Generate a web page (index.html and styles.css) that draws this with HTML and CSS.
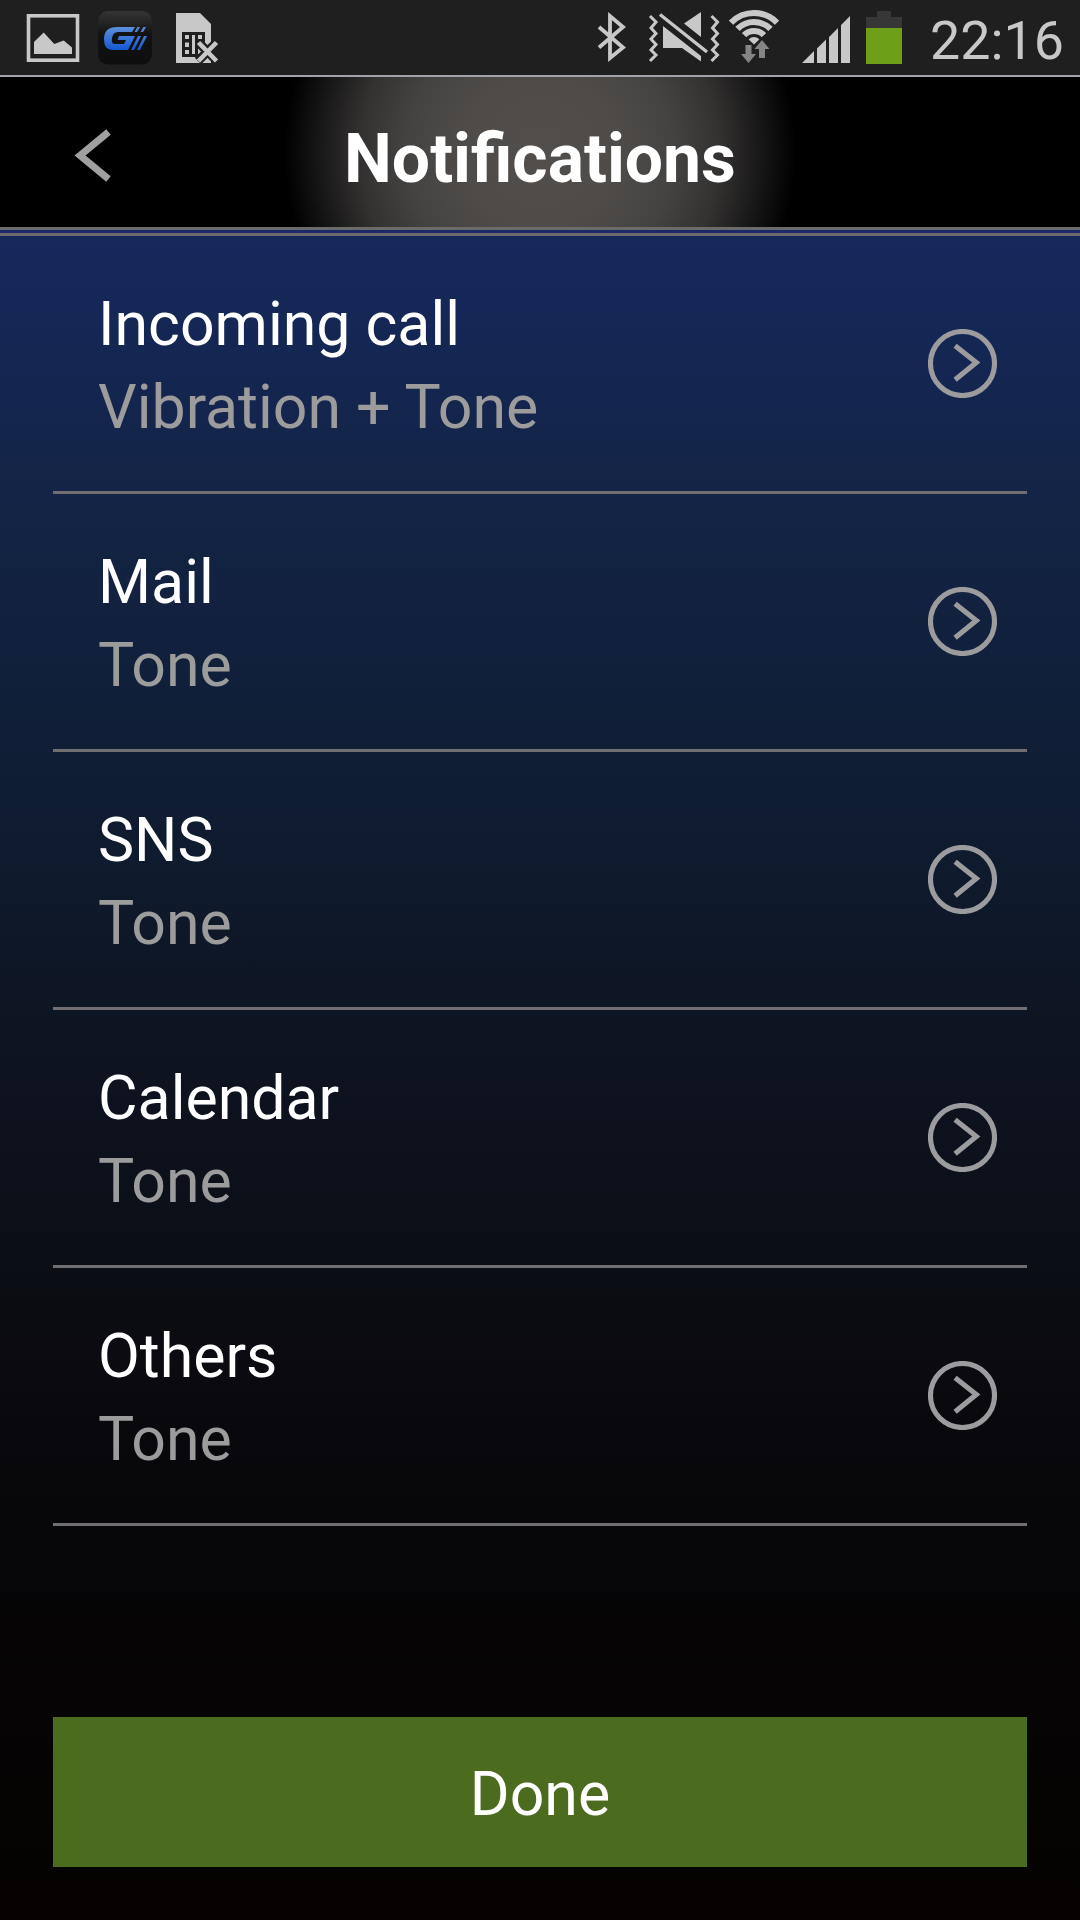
FILE: index.html
```html
<!DOCTYPE html>
<html lang="en">

<head>
    <meta charset="UTF-8">
    <meta name="viewport" content="width=device-width, initial-scale=1.0">
    <title>Notifications</title>
    <link rel="stylesheet" href="styles.css">
</head>

<body>
    <div class="status-bar">
        <div class="status-left">
            <!-- screenshot saved -->
            <svg width="54" height="75" viewBox="26 0 54 75">
                <rect x="28.5" y="15.8" width="49" height="44.4" fill="none" stroke="#c8c8c8" stroke-width="3.6" />
                <path d="M34 54V42L43.7 32.5L54.3 44L63.7 40.5L72 47.5V54Z" fill="#c8c8c8" />
            </svg>
            <!-- watch app -->
            <svg width="54" height="75" viewBox="98 0 54 75">
                <defs>
                    <linearGradient id="tile" x1="0" y1="0" x2="0" y2="1">
                        <stop offset="0" stop-color="#353535" />
                        <stop offset="0.45" stop-color="#121212" />
                        <stop offset="1" stop-color="#0e0e0e" />
                    </linearGradient>
                    <linearGradient id="blue" gradientUnits="userSpaceOnUse" x1="0" y1="27" x2="0" y2="51">
                        <stop offset="0" stop-color="#5d90dc" />
                        <stop offset="1" stop-color="#1055d0" />
                    </linearGradient>
                </defs>
                <rect x="98" y="11" width="54" height="53.5" rx="10" fill="url(#tile)" />
                <path d="M135 27H117Q104 27 104 39Q104 50 112 50H128L135 36H119L117.500 40H126L124 44H115Q111 44 112 38Q113 32 118 32H132Z" fill="url(#blue)" />
                <path d="M137.500 27H140L137 32H134.500ZM143.500 27H146L143 32H140.500ZM138 36H141L134 50H131ZM144 36H147L140 50H137Z" fill="url(#blue)" />
            </svg>
            <!-- no sim card -->
            <svg width="54" height="75" viewBox="170 0 54 75">
                <path d="M176 13H200L211 24V63H176Z" fill="#c8c8c8" />
                <path d="M182 32H205V57H182Z" fill="#1f1f1f" />
                <path d="M185 35H189V39H185ZM185 42.500H189V47H185ZM185 50H189V54H185ZM192 35H195V54H192ZM198 35H202V39H198ZM198 42.500H202V54H198Z" fill="#c8c8c8" />
                <path d="M198 42L217 61M217 42L198 61" stroke="#1f1f1f" stroke-width="9" />
                <path d="M212 24V39L220 38V65H194V63H212Z" fill="#1f1f1f" />
                <path d="M198.500 42.500L216.500 61M216.500 42.500L198.500 61" stroke="#c8c8c8" stroke-width="4.6" />
            </svg>
        </div>
        <div class="status-right">
            <!-- bluetooth -->
            <svg width="50" height="75" viewBox="590 0 50 75">
                <path d="M599 27L623 47.500L610 58V16L623 27L599 47.500" fill="none" stroke="#c8c8c8" stroke-width="3.8" />
            </svg>
            <!-- vibrate -->
            <svg width="84" height="75" viewBox="640 0 84 75">
                <path d="M650 16L656 22L651 28L656 33.500L651 39L656 44.500L651 50L656 55L650 61M711.500 16L717.500 22L712.500 28L717.500 33.500L712.500 39L717.500 44.500L712.500 50L717.500 55L711.500 61" fill="none" stroke="#c8c8c8" stroke-width="3" />
                <path d="M663 26L701 56V61.500L682 48H663ZM701 12V37L684 23.500Z" fill="#c8c8c8" />
                <path d="M660 14.500L707 52" stroke="#c8c8c8" stroke-width="3.4" />
            </svg>
            <!-- wifi -->
            <svg width="60" height="75" viewBox="724 0 60 75">
                <defs>
                    <clipPath id="fan">
                        <path d="M754 44.500L726 18V0H782V18Z" />
                    </clipPath>
                </defs>
                <g clip-path="url(#fan)" fill="none" stroke="#c8c8c8" stroke-width="6">
                    <circle cx="754" cy="45" r="32" />
                    <circle cx="754" cy="45" r="23" />
                    <circle cx="754" cy="45" r="14" />
                    <circle cx="754" cy="44" r="3.500" stroke-width="7" />
                </g>
                <path d="M745.500 45H751.500V54H756L748.500 63L741 54H745.500ZM759 58V49H754.500L762 40L769.500 49H765V58Z" fill="#858585" />
            </svg>
            <!-- signal -->
            <svg width="74" height="75" viewBox="784 0 74 75">
                <path d="M802 63L814 51V63ZM817 48.500L826 39.500V63H817ZM829 37L838 28V63H829ZM841 25L850 16V63H841Z" fill="#c8c8c8" />
            </svg>
            <!-- battery -->
            <svg width="52" height="75" viewBox="858 0 52 75">
                <path d="M866 64V17H877V11H891V17H902V64Z" fill="#373737" />
                <rect x="866" y="28" width="36" height="36" fill="#6f9f18" />
            </svg>
            <div class="clock">22:16</div>
        </div>
    </div>

    <div class="header">
        <a class="back" href="#" aria-label="Back">
            <svg width="40" height="60" viewBox="0 0 40 60">
                <path d="M36.500 7L8 30.500L36.500 54" fill="none" stroke="#a0a0a0" stroke-width="7" />
            </svg>
        </a>
        <h1>Notifications</h1>
    </div>

    <div class="content">
        <ul class="list">
            <li class="item">
                <div class="text">
                    <h2>Incoming call</h2>
                    <p>Vibration + Tone</p>
                </div>
                <svg class="arrow" viewBox="0 0 70 70">
                    <circle cx="35" cy="35" r="32.5" />
                    <path d="M27.500 17L49 34L27.500 51.500" />
                </svg>
            </li>
            <li class="item">
                <div class="text">
                    <h2>Mail</h2>
                    <p>Tone</p>
                </div>
                <svg class="arrow" viewBox="0 0 70 70">
                    <circle cx="35" cy="35" r="32.5" />
                    <path d="M27.500 17L49 34L27.500 51.500" />
                </svg>
            </li>
            <li class="item">
                <div class="text">
                    <h2>SNS</h2>
                    <p>Tone</p>
                </div>
                <svg class="arrow" viewBox="0 0 70 70">
                    <circle cx="35" cy="35" r="32.5" />
                    <path d="M27.500 17L49 34L27.500 51.500" />
                </svg>
            </li>
            <li class="item">
                <div class="text">
                    <h2>Calendar</h2>
                    <p>Tone</p>
                </div>
                <svg class="arrow" viewBox="0 0 70 70">
                    <circle cx="35" cy="35" r="32.5" />
                    <path d="M27.500 17L49 34L27.500 51.500" />
                </svg>
            </li>
            <li class="item">
                <div class="text">
                    <h2>Others</h2>
                    <p>Tone</p>
                </div>
                <svg class="arrow" viewBox="0 0 70 70">
                    <circle cx="35" cy="35" r="32.5" />
                    <path d="M27.500 17L49 34L27.500 51.500" />
                </svg>
            </li>
        </ul>
        <button class="done">Done</button>
    </div>
</body>

</html>
```
FILE: styles.css
```css
* {
    margin: 0;
    padding: 0;
    box-sizing: border-box;
    font-family: Roboto, sans-serif;
}

body {
    display: flex;
    flex-direction: column;
    width: 1080px;
    height: 1920px;
    background: #060202;
    overflow: hidden;
}

svg {
    display: block;
    flex-shrink: 0;
}

.status-bar {
    display: flex;
    justify-content: space-between;
    height: 75px;
    background: #1f1f1f;
}

.status-left {
    display: flex;
    gap: 18px;
    padding-left: 26px;
}

.status-right {
    display: flex;
}

.clock {
    width: 170px;
    padding-right: 16px;
    text-align: right;
    font-size: 53.8px;
    line-height: 82px;
    color: #c8c8c8;
}

.header {
    display: grid;
    grid-template-columns: 140px 1fr 140px;
    align-items: center;
    height: 161px;
    border-top: 2px solid #a2a3a8;
    border-bottom: 3px solid #6d6b70;
    background:
        linear-gradient(#6c6b6b 0 3px, #1c2968 3px 6px) bottom / 100% 6px no-repeat,
        radial-gradient(circle 256px at 540px 75px, #524e4c 0, #4e4b49 30%, #454341 52%, #343231 70%, #1c1b1b 84%, #000 100%);
    background-color: #000;
}

.back {
    padding-left: 72px;
}

.header h1 {
    padding-top: 8px;
    text-align: center;
    font-size: 67.8px;
    font-weight: bold;
    line-height: 80px;
    color: #fff;
}

.content {
    flex: 1;
    padding: 0 53px;
    background: linear-gradient(#15295d 0, #132446 15%, #0f1d33 33%, #0e1523 46%, #0b0e15 61%, #0b0b11 66%, #070609 75%, #060404 88%, #060202 100%);
}

.list {
    list-style: none;
}

.item {
    display: flex;
    justify-content: space-between;
    align-items: center;
    height: 258px;
    padding: 0 30px 0 45px;
    border-bottom: 3px solid #706e70;
}

.text {
    padding-top: 4px;
}

.item h2,
.item p {
    font-size: 60.8px;
    font-weight: normal;
    line-height: 83px;
}

.item h2 {
    color: #fff;
}

.item p {
    color: #9c9c9c;
}

.arrow {
    width: 69px;
    height: 69px;
    fill: none;
    stroke: #9c9c9e;
    stroke-width: 5.2;
}

.done {
    display: block;
    width: 100%;
    height: 150px;
    margin-top: 191px;
    padding-top: 4px;
    border: none;
    background: #4b6b1e;
    font-size: 60.8px;
    color: #fff;
}
```
